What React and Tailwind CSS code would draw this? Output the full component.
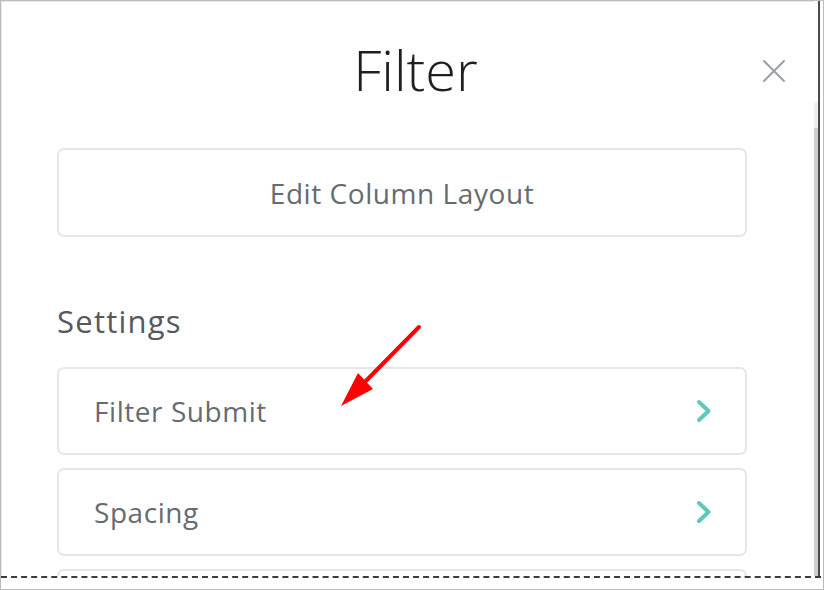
import React from 'react';

const ROWS = ['Filter Submit', 'Spacing', ''];

function Chevron() {
  return (
    <svg width="16" height="24" viewBox="0 0 16 24" fill="none">
      <path d="M3 3 L12.5 12 L3 21" stroke="#5ec8bc" strokeWidth="4" strokeLinecap="round" strokeLinejoin="round" />
    </svg>
  );
}

function CloseIcon() {
  return (
    <svg width="24" height="24" viewBox="0 0 24 24" fill="none">
      <path d="M2 2 L22 22 M22 2 L2 22" stroke="#9aa0a4" strokeWidth="2" strokeLinecap="round" />
    </svg>
  );
}

export default function App() {
  return (
    <div
      className="relative w-[824px] h-[590px] overflow-hidden border border-[#bcbcbc] bg-white flex flex-col"
      style={{ fontFamily: '"Open Sans", "Liberation Sans", sans-serif' }}
    >
      <div className="flex h-[575px] shrink-0">
        {/* panel */}
        <div className="w-[813px] h-full overflow-hidden border-t border-l border-[#e8e8e8] bg-white">
          <div className="flex items-start h-[146px] pl-[55px] pr-[28px] pt-[29px]">
            <div className="w-[12px]" />
            <h1 className="flex-1 text-center text-[56px] leading-[76px] font-light text-[#1f1f1f]">Filter</h1>
            <button className="w-[24px] h-[24px] mt-[28px]">
              <CloseIcon />
            </button>
          </div>

          <div className="pl-[55px] w-[745px]">
            <button className="w-full h-[89px] rounded-[7px] border-2 border-[#e6e6e6] text-[28px] tracking-[0.02em] text-[#666b70] flex items-center justify-center">
              Edit Column Layout
            </button>

            <h2 className="mt-[63px] text-[31px] leading-[42px] tracking-[0.04em] text-[#55595d]">Settings</h2>

            <div className="mt-[25px] flex flex-col gap-[13px]">
              {ROWS.map((r, i) => (
                <div
                  key={i}
                  className="h-[88px] shrink-0 rounded-[7px] border-2 border-[#e6e6e6] flex items-center justify-between pl-[35px] pr-[33px]"
                >
                  <span className="text-[28px] tracking-[0.02em] text-[#666b70]">{r}</span>
                  <Chevron />
                </div>
              ))}
            </div>
          </div>
        </div>

        {/* scrollbar */}
        <div className="w-[4px] h-full flex flex-col pt-[101px]">
          <div className="h-[26px] bg-[#efefef]" />
          <div className="flex-1 bg-[#cfcfcf]" />
        </div>
        <div className="w-[2px] h-full bg-[#4a4a4a]" />
      </div>

      {/* torn edge */}
      <div className="h-[2px] w-[820px] border-t-2 border-dashed border-[#3c3c3c]" />

      {/* annotation arrow */}
      <svg className="absolute left-0 top-0 pointer-events-none" width="824" height="590">
        <line x1="418" y1="326" x2="356" y2="389" stroke="#ff0000" strokeWidth="4" strokeLinecap="round" />
        <polygon points="340,405 357,372 372,388" fill="#ff0000" />
      </svg>
    </div>
  );
}
